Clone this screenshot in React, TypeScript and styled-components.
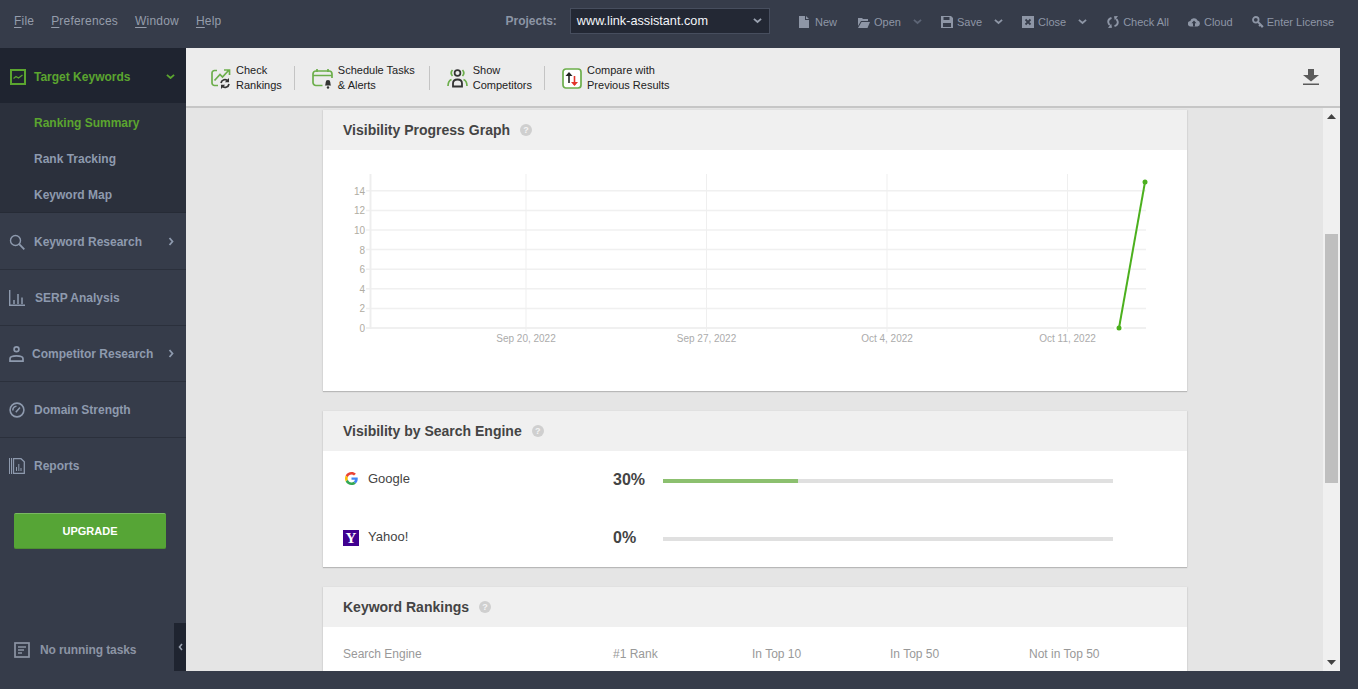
import React from "react";
import styled, { createGlobalStyle } from "styled-components";

const GlobalStyle = createGlobalStyle`
  html, body {
    margin: 0;
    padding: 0;
    height: 100%;
    overflow: hidden;
    background: #363c4a;
    font-family: "Liberation Sans", Arial, sans-serif;
  }
`;

const Page = styled.div`
  width: 1358px;
  height: 689px;
  display: flex;
  flex-direction: column;
  background: #363c4a;
`;

const TopBar = styled.header`
  height: 48px;
  flex: none;
  display: flex;
  align-items: center;
  padding: 0 24px 6px 14px;
  box-sizing: border-box;
`;
const Menu = styled.nav`
  display: flex;
  gap: 17px;
  font-size: 12px;
  letter-spacing: 0.2px;
  color: #959cab;
`;
const MenuItem = styled.span`
  & > u {
    text-underline-offset: 2px;
  }
`;
const ProjectsLabel = styled.span`
  margin-left: 284px;
  font-size: 12px;
  font-weight: bold;
  color: #8d95a5;
`;
const ProjectSelect = styled.div`
  margin-left: 13px;
  width: 200px;
  height: 26px;
  box-sizing: border-box;
  background: #232834;
  border: 1px solid #474e5e;
  display: flex;
  align-items: center;
  justify-content: space-between;
  padding: 0 7px 0 6px;
  font-size: 12.7px;
  color: #f4f6fa;
`;
const SelectArrow = styled.span`
  display: flex;
  color: #9aa2b0;
`;
const Actions = styled.div`
  margin-left: auto;
  display: flex;
  align-items: center;
  gap: 19px;
  padding-top: 2px;
`;
const Action = styled.div`
  display: flex;
  align-items: center;
  gap: 4px;
  font-size: 11px;
  color: #8e96a6;
`;
const NewAction = styled(Action)`
  gap: 6px;
  margin-right: 2px;
`;
const CloseAction = styled(Action)`
  margin-right: 1px;
`;
const KeyAction = styled(Action)`
  gap: 3px;
`;
const ActionChevron = styled.span<{ $dim?: boolean }>`
  display: flex;
  margin-left: 8px;
  color: ${(p) => (p.$dim ? "#5d6576" : "#8e96a6")};
`;

const Body = styled.div`
  flex: 1;
  display: flex;
  min-height: 0;
`;

const Sidebar = styled.aside`
  width: 186px;
  flex: none;
  position: relative;
  display: flex;
  flex-direction: column;
`;
const ActiveHead = styled.div`
  height: 55px;
  box-sizing: border-box;
  background: #1f2430;
  display: flex;
  align-items: center;
  padding: 2px 11px 0 10px;
  gap: 8px;
  font-size: 12px;
  font-weight: bold;
  color: #5ba52f;
`;
const HeadLabel = styled.span`
  flex: 1;
`;
const SubMenu = styled.div`
  background: #2b303c;
  height: 110px;
  padding-top: 2px;
  display: flex;
  flex-direction: column;
  border-bottom: 1px solid #262b36;
  box-sizing: border-box;
`;
const SubItem = styled.div<{ $active?: boolean }>`
  height: 36px;
  flex: none;
  display: flex;
  align-items: center;
  padding-left: 34px;
  font-size: 12px;
  font-weight: bold;
  color: ${(p) => (p.$active ? "#5ba52f" : "#8e9aae")};
`;
const NavItem = styled.div`
  height: 56px;
  box-sizing: border-box;
  display: flex;
  align-items: center;
  padding: 1px 12px 0 9px;
  font-size: 12px;
  font-weight: bold;
  color: #8e9aae;
  & + & {
    border-top: 1px solid #2b303c;
    padding-top: 0;
  }
`;
const NavLabel = styled.span<{ $gap: number }>`
  flex: 1;
  margin-left: ${(p) => p.$gap}px;
`;
const UpgradeButton = styled.div`
  margin: 20px 20px 0 14px;
  height: 36px;
  background: #56a536;
  border-top: 1px solid #7ab863;
  border-bottom: 1px solid #4c9030;
  border-radius: 2px;
  box-sizing: border-box;
  display: flex;
  align-items: center;
  justify-content: center;
  font-size: 11px;
  font-weight: bold;
  color: #fff;
`;
const Tasks = styled.div`
  margin-top: auto;
  margin-bottom: 31px;
  padding-left: 14px;
  display: flex;
  align-items: center;
  gap: 10px;
  font-size: 12px;
  font-weight: bold;
  letter-spacing: -0.1px;
  color: #8c94a4;
`;
const Collapse = styled.div`
  position: absolute;
  right: 0;
  bottom: 18px;
  width: 12px;
  height: 48px;
  background: #1f2430;
  display: flex;
  align-items: center;
  justify-content: center;
  color: #9aa2b0;
`;

const Main = styled.main`
  flex: none;
  width: 1154px;
  height: 623px;
  display: flex;
  flex-direction: column;
  background: #e5e5e5;
`;
const Toolbar = styled.div`
  height: 60px;
  flex: none;
  box-sizing: border-box;
  background: #ececec;
  border-bottom: 2px solid #c6c6c6;
  display: flex;
  align-items: center;
  padding: 2px 21px 0 25px;
`;
const Tool = styled.div`
  display: flex;
  align-items: center;
  gap: 5px;
  font-size: 11px;
  line-height: 15px;
  color: #222;
`;
const ToolSep = styled.span<{ $left: number }>`
  width: 1px;
  height: 24px;
  background: #c4c4c4;
  margin: 0 17px 0 ${(p) => p.$left}px;
`;
const ToolEnd = styled.div`
  margin-left: auto;
  margin-bottom: 2px;
  display: flex;
`;
const Workspace = styled.div`
  flex: 1;
  display: flex;
  min-height: 0;
`;
const Scroller = styled.div`
  flex: 1;
  overflow: hidden;
  display: flex;
  flex-direction: column;
  align-items: center;
  padding-top: 2px;
  gap: 20px;
`;
const Card = styled.section`
  width: 864px;
  flex: none;
  margin-left: 1px;
  background: #fff;
  box-shadow: 0 1px 1px #b8b8b8, 1px 0 1px #dcdcdc, -1px 0 1px #dcdcdc;
`;
const CardHead = styled.div`
  height: 40px;
  background: #f0f0f0;
  display: flex;
  align-items: center;
  gap: 10px;
  padding-left: 20px;
  font-size: 14px;
  font-weight: bold;
  color: #444;
`;
const Help = styled.span`
  width: 12px;
  height: 12px;
  border-radius: 50%;
  background: #cfcfcf;
  color: #f4f4f4;
  font-size: 9px;
  line-height: 12px;
  text-align: center;
  font-weight: bold;
`;
const ChartBody = styled.div`
  height: 241px;
  & > svg {
    display: block;
  }
`;
const EngineRow = styled.div`
  height: 58px;
  display: grid;
  grid-template-columns: 25px 245px 50px 450px;
  align-items: center;
  padding-left: 20px;
  padding-bottom: 1px;
  box-sizing: border-box;
`;
const EngineName = styled.span`
  font-size: 13px;
  margin-bottom: 2px;
  color: #444;
`;
const Percent = styled.span`
  font-size: 16px;
  font-weight: bold;
  color: #444;
`;
const Track = styled.div`
  height: 4px;
  margin-top: 3px;
  background: #e0e0e0;
`;
const Fill = styled.div`
  height: 100%;
  background: #8cc06f;
`;
const GoogleMark = styled.span`
  display: flex;
  margin: 0 0 2px 2px;
`;
const YahooMark = styled.span`
  width: 16px;
  height: 16px;
  background: #400090;
  color: #fff;
  font-family: "Liberation Serif", serif;
  font-weight: bold;
  font-size: 15px;
  line-height: 16px;
  text-align: center;
`;
const TableHead = styled.div`
  display: grid;
  grid-template-columns: 270px 139px 138px 139px 1fr;
  padding: 20px 0 10px 20px;
  font-size: 12px;
  line-height: 14px;
  color: #999;
`;
const ScrollBar = styled.div`
  width: 17px;
  flex: none;
  background: #f0f0f0;
  display: flex;
  flex-direction: column;
  align-items: center;
  padding: 6px 0 6px;
  box-sizing: border-box;
`;
const Thumb = styled.div`
  width: 13px;
  height: 249px;
  margin-top: 115px;
  background: #bfbfbf;
`;
const ArrowDown = styled.span`
  margin-top: auto;
  display: flex;
`;

const Chevron = ({ size = 9 }: { size?: number }) => (
  <svg width={size} height={size * 0.6} viewBox="0 0 10 6">
    <path d="M1 1l4 3.5L9 1" fill="none" stroke="currentColor" strokeWidth="2" />
  </svg>
);

const SideArrow = () => (
  <svg width="6" height="9" viewBox="0 0 6 9">
    <path d="M1.500 1l3 3.500-3 3.500" fill="none" stroke="currentColor" strokeWidth="1.800" />
  </svg>
);

const IconNew = () => (
  <svg width="10" height="12" viewBox="0 0 10 12">
    <path d="M0 0h6v4h4v8H0zM7 0l3 3H7z" fill="currentColor" />
  </svg>
);
const IconOpen = () => (
  <svg width="12" height="11" viewBox="0 0 12 11">
    <path d="M0 1h4l1 1h5v2H3L0 9z" fill="currentColor" />
    <path d="M3.500 5H12l-2.500 6H0z" fill="currentColor" />
  </svg>
);
const IconSave = () => (
  <svg width="12" height="12" viewBox="0 0 12 12">
    <path fillRule="evenodd" d="M0 0h10l2 2v10H0zM2.500 1v3h6V1zM2 7v4h8V7z" fill="currentColor" />
  </svg>
);
const IconClose = () => (
  <svg width="12" height="12" viewBox="0 0 12 12">
    <rect width="12" height="12" fill="currentColor" />
    <path d="M3.500 3.500l5 5M8.500 3.500l-5 5" stroke="#363c4a" strokeWidth="1.800" />
  </svg>
);
const IconSync = () => (
  <svg width="12" height="12" viewBox="0 0 12 12">
    <path
      d="M4.500 1.800C2.300 2.500 1 4.200 1.300 6.300c.2 1.100.7 2 1.500 2.700M7.500 10.200c2.200-.7 3.500-2.400 3.200-4.500-.2-1.100-.7-2-1.500-2.700"
      fill="none"
      stroke="currentColor"
      strokeWidth="1.900"
    />
    <path d="M1 12l4-.3-.8-3.900zM11 0L7 .3l.8 3.900z" fill="currentColor" />
  </svg>
);
const IconCloud = () => (
  <svg width="12" height="10" viewBox="0 0 12 10">
    <path d="M2.800 9.500a2.700 2.700 0 0 1-.5-5.400 3.800 3.800 0 0 1 7.200-.6 3 3 0 0 1 0 5.900z" fill="currentColor" />
    <path d="M6 3.500L3.500 6.300h1.500v3.300h2V6.300h1.500z" fill="#363c4a" />
  </svg>
);
const IconKey = () => (
  <svg width="12" height="12" viewBox="0 0 12 12">
    <circle cx="3.800" cy="3.800" r="2.800" fill="none" stroke="currentColor" strokeWidth="1.800" />
    <path d="M5.500 5.500L11 11M8.500 8.500l-1.500 1.500M10 10l-1 1" stroke="currentColor" strokeWidth="1.800" />
  </svg>
);

const IconTarget = () => (
  <svg width="16" height="16" viewBox="0 0 16 16">
    <rect x="1" y="1" width="14" height="14" fill="none" stroke="currentColor" strokeWidth="2" />
    <path d="M3.500 9.500l2.500-2 2.500 1.500 4-3" fill="none" stroke="currentColor" strokeWidth="1.300" />
  </svg>
);
const IconSearch = () => (
  <svg width="16" height="16" viewBox="0 0 16 16">
    <circle cx="6.500" cy="6.500" r="5" fill="none" stroke="currentColor" strokeWidth="1.400" />
    <path d="M10.200 10.200L15.300 15.300" stroke="currentColor" strokeWidth="1.800" />
  </svg>
);
const IconBars = () => (
  <svg width="16" height="16" viewBox="0 0 16 16">
    <path d="M.7 0v15.300H16" fill="none" stroke="currentColor" strokeWidth="1.400" />
    <path d="M5 10v4M9 4v10M13 7.500v6.500" fill="none" stroke="currentColor" strokeWidth="1.500" />
  </svg>
);
const IconPerson = () => (
  <svg width="15" height="16" viewBox="0 0 15 16">
    <circle cx="7.500" cy="3.300" r="2.400" fill="none" stroke="currentColor" strokeWidth="1.700" />
    <path d="M1 15.100v-2.400c0-1.500 2-2.800 6.500-2.800s6.500 1.300 6.500 2.800v2.400z" fill="none" stroke="currentColor" strokeWidth="1.700" />
  </svg>
);
const IconGauge = () => (
  <svg width="16" height="16" viewBox="0 0 16 16">
    <circle cx="8" cy="8" r="6.900" fill="none" stroke="currentColor" strokeWidth="1.600" />
    <path d="M3.800 8.500a4.200 4.200 0 0 1 3.700-4.200M6.800 10.200l4.200-4.700" fill="none" stroke="currentColor" strokeWidth="1.500" />
  </svg>
);
const IconReports = () => (
  <svg width="16" height="16" viewBox="0 0 16 16">
    <path d="M.5 0v16M2.500 0v16" stroke="currentColor" strokeWidth="1" />
    <path d="M4.500.7h7.500l3.300 3v11.600H4.500z" fill="none" stroke="currentColor" strokeWidth="1.300" />
    <path d="M7.500 9v4M9.800 6v7M12 10v3" stroke="currentColor" strokeWidth="1" />
  </svg>
);
const IconTasks = () => (
  <svg width="16" height="16" viewBox="0 0 16 16">
    <rect x="1" y="1" width="14" height="14" fill="none" stroke="currentColor" strokeWidth="1.700" />
    <path d="M4 5h8M4 8h6M4 11h4" stroke="currentColor" strokeWidth="1.400" />
  </svg>
);

const ToolCheck = () => (
  <svg width="20" height="21" viewBox="0 0 20 21">
    <path d="M6 2.500H3.500a2.500 2.500 0 0 0-2.500 2.500v10a2.500 2.500 0 0 0 2.500 2.500H7" fill="none" stroke="#6cae4b" strokeWidth="1.700" />
    <path d="M3.500 12.500L9 6.500l2.500 2.500 6-6.500M13 2h5.500v5" fill="none" stroke="#6cae4b" strokeWidth="1.700" />
    <path d="M10 15a4 4 0 0 1 7-2M18 16a4 4 0 0 1-7 2" fill="none" stroke="#333" strokeWidth="1.700" />
    <path d="M18 10v4.200h-4.200zM10 21v-4.200h4.200z" fill="#333" />
  </svg>
);
const ToolSchedule = () => (
  <svg width="21" height="21" viewBox="0 0 21 21">
    <path d="M10.500 17.500H4a3 3 0 0 1-3-3V6a3 3 0 0 1 3-3h13a3 3 0 0 1 3 3v4M1 7.500h19M5 1v3M16 1v3" fill="none" stroke="#6cae4b" strokeWidth="1.700" />
    <path d="M12.800 17.500c.8-.8.700-2 .9-3.300a2.300 2.300 0 0 1 4.600 0c.2 1.300.1 2.500.9 3.300z" fill="#333" />
    <circle cx="16" cy="19.500" r="1.200" fill="#333" />
  </svg>
);
const ToolCompetitors = () => (
  <svg width="21" height="20" viewBox="0 0 21 20">
    <circle cx="10.500" cy="5" r="2.900" fill="none" stroke="#333" strokeWidth="1.700" />
    <path d="M6 18.500v-3c0-2.500 2-4 4.500-4s4.500 1.500 4.500 4v3z" fill="none" stroke="#333" strokeWidth="1.800" />
    <path d="M5.500 2a4.500 4.500 0 0 0 0 6M15.500 2a4.500 4.500 0 0 1 0 6M1 18c0-3.500 1-5.500 3.500-6.500M20 18c0-3.500-1-5.500-3.500-6.500" fill="none" stroke="#6cae4b" strokeWidth="1.700" />
  </svg>
);
const ToolCompare = () => (
  <svg width="20" height="21" viewBox="0 0 20 21">
    <rect x="1" y="1" width="18" height="19" rx="3" fill="#fff" stroke="#6cae4b" strokeWidth="1.700" />
    <path d="M7 15V6" stroke="#222" strokeWidth="1.600" />
    <path d="M3.500 8L7 4l3.500 4z" fill="#222" />
    <path d="M12.500 8v9" stroke="#e2352a" strokeWidth="1.600" />
    <path d="M9 14l3.500 4 3.500-4z" fill="#e2352a" />
  </svg>
);
const IconDownload = () => (
  <svg width="16" height="16" viewBox="0 0 16 16">
    <path d="M5 0h6v6h5l-8 6.500L0 6h5zM0 14.500h16V16H0z" fill="#5a5a5a" />
  </svg>
);
const GoogleIcon = () => (
  <svg width="13" height="13" viewBox="0 0 48 48">
    <path fill="#EA4335" d="M24 9.500c3.500 0 6.700 1.300 9.200 3.600l6.900-6.900C35.900 2.400 30.500 0 24 0 14.600 0 6.500 5.400 2.600 13.200l8 6.200C12.500 13.700 17.800 9.500 24 9.500z" />
    <path fill="#4285F4" d="M47 24.500c0-1.600-.2-3.200-.4-4.500H24v9h12.900c-.6 3-2.200 5.500-4.800 7.200l7.700 6c4.500-4.200 7.200-10.300 7.200-17.700z" />
    <path fill="#FBBC05" d="M10.600 28.600c-.5-1.400-.8-3-.8-4.600s.3-3.200.8-4.600l-8-6.200C.9 16.400 0 20.100 0 24s.9 7.600 2.600 10.800z" />
    <path fill="#34A853" d="M24 48c6.500 0 11.900-2.100 15.800-5.800l-7.700-6c-2.100 1.400-4.900 2.300-8.100 2.300-6.200 0-11.500-4.200-13.400-9.900l-8 6.200C6.500 42.600 14.600 48 24 48z" />
  </svg>
);

const yTicks = [0, 2, 4, 6, 8, 10, 12, 14];
const xTicks = [
  { x: 203, label: "Sep 20, 2022" },
  { x: 383.5, label: "Sep 27, 2022" },
  { x: 564, label: "Oct 4, 2022" },
  { x: 744.5, label: "Oct 11, 2022" },
];

const VisibilityChart = () => (
  <svg width="864" height="241" viewBox="0 0 864 241">
    {yTicks.map((t, i) => {
      const y = 178 - i * 19.6;
      return (
        <g key={t}>
          <line x1="43" x2="823" y1={y} y2={y} stroke="#f0f0f0" strokeWidth={t === 0 ? 2 : 1.5} />
          <text x="42" y={y + 4} textAnchor="end" fontSize="10" fill="#b0aca2" fontFamily="Liberation Sans">
            {t}
          </text>
        </g>
      );
    })}
    <line x1="47.500" x2="47.500" y1="24" y2="179" stroke="#eeeeee" strokeWidth="2" />
    {xTicks.map((t) => (
      <g key={t.label}>
        <line x1={t.x} x2={t.x} y1="24" y2="182" stroke="#efefef" strokeWidth="1" />
        <text x={t.x} y="191.500" textAnchor="middle" fontSize="10" fill="#ababab" fontFamily="Liberation Sans">
          {t.label}
        </text>
      </g>
    ))}
    <circle cx="796" cy="178" r="5" fill="#fff" />
    <line x1="796" y1="178" x2="822" y2="32" stroke="#4cb01e" strokeWidth="2" />
    <circle cx="796" cy="178" r="2.500" fill="#4cb01e" />
    <circle cx="822" cy="32" r="2.500" fill="#4cb01e" />
  </svg>
);

export default function App() {
  return (
    <Page>
      <GlobalStyle />
      <TopBar>
        <Menu>
          <MenuItem><u>F</u>ile</MenuItem>
          <MenuItem><u>P</u>references</MenuItem>
          <MenuItem><u>W</u>indow</MenuItem>
          <MenuItem><u>H</u>elp</MenuItem>
        </Menu>
        <ProjectsLabel>Projects:</ProjectsLabel>
        <ProjectSelect>
          www.link-assistant.com
          <SelectArrow><Chevron /></SelectArrow>
        </ProjectSelect>
        <Actions>
          <NewAction><IconNew />New</NewAction>
          <Action><IconOpen />Open<ActionChevron $dim><Chevron /></ActionChevron></Action>
          <Action><IconSave />Save<ActionChevron><Chevron /></ActionChevron></Action>
          <CloseAction><IconClose />Close<ActionChevron><Chevron /></ActionChevron></CloseAction>
          <Action><IconSync />Check All</Action>
          <Action><IconCloud />Cloud</Action>
          <KeyAction><IconKey />Enter License</KeyAction>
        </Actions>
      </TopBar>
      <Body>
        <Sidebar>
          <ActiveHead>
            <IconTarget />
            <HeadLabel>Target Keywords</HeadLabel>
            <Chevron />
          </ActiveHead>
          <SubMenu>
            <SubItem $active>Ranking Summary</SubItem>
            <SubItem>Rank Tracking</SubItem>
            <SubItem>Keyword Map</SubItem>
          </SubMenu>
          <NavItem><IconSearch /><NavLabel $gap={9}>Keyword Research</NavLabel><SideArrow /></NavItem>
          <NavItem><IconBars /><NavLabel $gap={10}>SERP Analysis</NavLabel></NavItem>
          <NavItem><IconPerson /><NavLabel $gap={8}>Competitor Research</NavLabel><SideArrow /></NavItem>
          <NavItem><IconGauge /><NavLabel $gap={9}>Domain Strength</NavLabel></NavItem>
          <NavItem><IconReports /><NavLabel $gap={9}>Reports</NavLabel></NavItem>
          <UpgradeButton>UPGRADE</UpgradeButton>
          <Tasks><IconTasks />No running tasks</Tasks>
          <Collapse>
            <svg width="5" height="8" viewBox="0 0 5 8">
              <path d="M4 1L1.500 4 4 7" fill="none" stroke="currentColor" strokeWidth="1.600" />
            </svg>
          </Collapse>
        </Sidebar>
        <Main>
          <Toolbar>
            <Tool><ToolCheck /><span>Check<br />Rankings</span></Tool>
            <ToolSep $left={12} />
            <Tool><ToolSchedule /><span>Schedule Tasks<br />&amp; Alerts</span></Tool>
            <ToolSep $left={14} />
            <Tool><ToolCompetitors /><span>Show<br />Competitors</span></Tool>
            <ToolSep $left={12} />
            <Tool><ToolCompare /><span>Compare with<br />Previous Results</span></Tool>
            <ToolEnd><IconDownload /></ToolEnd>
          </Toolbar>
          <Workspace>
            <Scroller>
              <Card>
                <CardHead>Visibility Progress Graph<Help>?</Help></CardHead>
                <ChartBody><VisibilityChart /></ChartBody>
              </Card>
              <Card>
                <CardHead>Visibility by Search Engine<Help>?</Help></CardHead>
                <EngineRow>
                  <GoogleMark><GoogleIcon /></GoogleMark>
                  <EngineName>Google</EngineName>
                  <Percent>30%</Percent>
                  <Track><Fill style={{ width: "30%" }} /></Track>
                </EngineRow>
                <EngineRow>
                  <YahooMark>Y</YahooMark>
                  <EngineName>Yahoo!</EngineName>
                  <Percent>0%</Percent>
                  <Track />
                </EngineRow>
              </Card>
              <Card>
                <CardHead>Keyword Rankings<Help>?</Help></CardHead>
                <TableHead>
                  <span>Search Engine</span>
                  <span>#1 Rank</span>
                  <span>In Top 10</span>
                  <span>In Top 50</span>
                  <span>Not in Top 50</span>
                </TableHead>
              </Card>
            </Scroller>
            <ScrollBar>
              <svg width="9" height="5" viewBox="0 0 9 5"><path d="M4.500 0L9 5H0z" fill="#444" /></svg>
              <Thumb />
              <ArrowDown>
                <svg width="9" height="5" viewBox="0 0 9 5"><path d="M0 0h9L4.500 5z" fill="#444" /></svg>
              </ArrowDown>
            </ScrollBar>
          </Workspace>
        </Main>
      </Body>
    </Page>
  );
}
